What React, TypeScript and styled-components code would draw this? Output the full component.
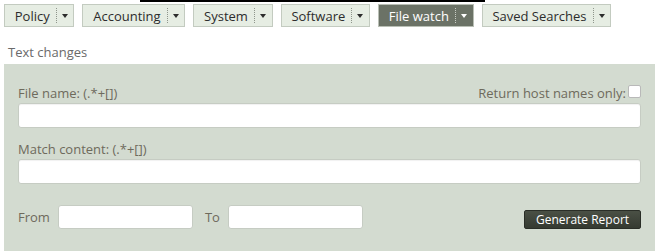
import React from 'react';
import styled, { createGlobalStyle } from 'styled-components';

const GlobalStyle = createGlobalStyle`
  body {
    margin: 0;
    background: #ffffff;
    font-family: "Open Sans", "Liberation Sans", sans-serif;
  }
`;

const menus = ['Policy', 'Accounting', 'System', 'Software', 'File watch', 'Saved Searches'];

const Page = styled.div`
  width: 658px;
  height: 251px;
  overflow: hidden;
`;

const TopRule = styled.div`
  width: 345px;
  height: 2px;
  margin-left: 140px;
  background: #000000;
`;

const TabBar = styled.nav`
  display: flex;
  gap: 8px;
  padding: 2px 0 0 4px;
`;

const Tab = styled.div<{ $active?: boolean }>`
  display: flex;
  align-items: center;
  height: 23px;
  box-sizing: border-box;
  padding: 0 5.75px 0 9.75px;
  border: 1px solid ${p => (p.$active ? '#b9bfb5' : '#c3cbc0')};
  background: ${p => (p.$active ? '#6b7266' : '#e6ede3')};
  color: ${p => (p.$active ? '#ffffff' : '#2c2c2c')};
  font-size: 13px;
`;

const Divider = styled.span<{ $active?: boolean }>`
  width: 0;
  height: 15px;
  margin: 0 5px 0 6px;
  border-left: 1px dotted ${p => (p.$active ? '#c9cec6' : '#8e958b')};
`;

const Caret = styled.span<{ $active?: boolean }>`
  width: 0;
  height: 0;
  border-left: 3px solid transparent;
  border-right: 3px solid transparent;
  border-top: 4px solid ${p => (p.$active ? '#ffffff' : '#2c2c2c')};
`;

const SectionTitle = styled.div`
  margin: 16px 0 0 8px;
  height: 18px;
  line-height: 18px;
  font-size: 13px;
  color: #6a6a6a;
`;

const Panel = styled.section`
  margin: 3px 3px 0 4px;
  height: 200px;
  box-sizing: border-box;
  padding: 20px 14px 0 14px;
  background: #d3dbd0;
`;

const LabelRow = styled.div`
  display: flex;
  justify-content: space-between;
  align-items: center;
  height: 18px;
`;

const Label = styled.span`
  font-size: 13px;
  color: #6e6a5c;
`;

const CheckLabel = styled.label`
  display: flex;
  align-items: center;
  gap: 2px;
  font-size: 13px;
  color: #6e6a5c;
`;

const Check = styled.input.attrs({ type: 'checkbox' })`
  appearance: none;
  margin: 0 0 4px 0;
  width: 13px;
  height: 13px;
  box-sizing: border-box;
  border: 1px solid #b9b9b9;
  border-radius: 2px;
  background: #ffffff;
`;

const TextField = styled.input`
  display: block;
  width: 100%;
  height: 25px;
  box-sizing: border-box;
  margin-top: 1px;
  border: 1px solid #c6ccc3;
  border-radius: 3px;
  background: #ffffff;
  box-shadow: inset 0 1px 1px rgba(0, 0, 0, 0.06);
`;

const Spacer = styled.div<{ $h: number }>`
  height: ${p => p.$h}px;
`;

const DateRow = styled.div`
  display: flex;
  align-items: flex-end;
  margin-top: 21px;
`;

const DateLabel = styled.span`
  align-self: center;
  font-size: 13px;
  color: #6e6a5c;
  margin-right: 8px;
`;

const DateField = styled.input`
  width: 135px;
  height: 24px;
  box-sizing: border-box;
  margin-right: 12px;
  border: 1px solid #c6ccc3;
  border-radius: 3px;
  background: #ffffff;
`;

const ReportButton = styled.button`
  margin-left: auto;
  height: 19px;
  width: 117px;
  padding: 0;
  border: 1px solid #2a2e27;
  border-radius: 2px;
  background: linear-gradient(#4a5045, #353a31);
  color: #ffffff;
  font-family: "Open Sans", "Liberation Sans", sans-serif;
  font-size: 12px;
  line-height: 17px;
`;

export default function App() {
  return (
    <Page>
      <GlobalStyle />
      <TopRule />
      <TabBar>
        {menus.map(m => {
          const active = m === 'File watch';
          return (
            <Tab key={m} $active={active}>
              {m}
              <Divider $active={active} />
              <Caret $active={active} />
            </Tab>
          );
        })}
      </TabBar>
      <SectionTitle>Text changes</SectionTitle>
      <Panel>
        <LabelRow>
          <Label>File name: (.*+[])</Label>
          <CheckLabel>
            Return host names only:
            <Check />
          </CheckLabel>
        </LabelRow>
        <TextField />
        <Spacer $h={12} />
        <LabelRow>
          <Label>Match content: (.*+[])</Label>
        </LabelRow>
        <TextField />
        <DateRow>
          <DateLabel>From</DateLabel>
          <DateField />
          <DateLabel>To</DateLabel>
          <DateField />
          <ReportButton>Generate Report</ReportButton>
        </DateRow>
      </Panel>
    </Page>
  );
}
